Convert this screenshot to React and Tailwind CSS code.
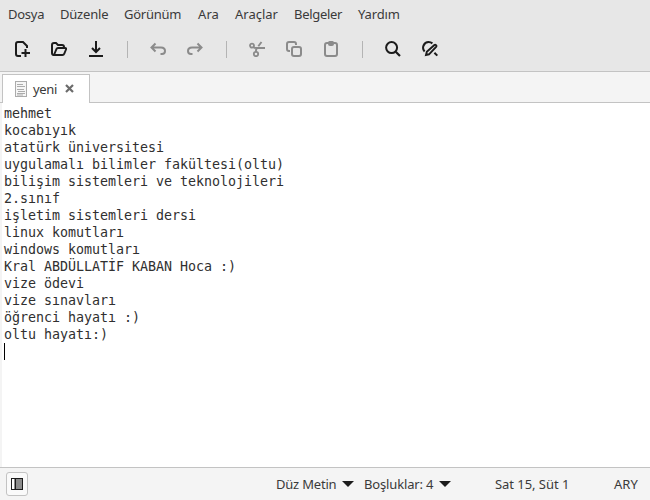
import React from "react";

const menus = [
  { label: "Dosya", cls: "w-[52px]", text: "tracking-[-0.25px]" },
  { label: "Düzenle", cls: "w-[64px]", text: "tracking-[-0.2px]" },
  { label: "Görünüm", cls: "w-[74px]", text: "tracking-[-0.25px]" },
  { label: "Ara", cls: "w-[37px]", text: "tracking-[0.1px]" },
  { label: "Araçlar", cls: "w-[59px]", text: "tracking-[0px]" },
  { label: "Belgeler", cls: "w-[64px]", text: "tracking-[-0.3px]" },
  { label: "Yardım", cls: "w-[50px]", text: "tracking-[-0.15px]" },
];

const lines = [
  "mehmet",
  "kocabıyık",
  "atatürk üniversitesi",
  "uygulamalı bilimler fakültesi(oltu)",
  "bilişim sistemleri ve teknolojileri",
  "2.sınıf",
  "işletim sistemleri dersi",
  "linux komutları",
  "windows komutları",
  "Kral ABDÜLLATİF KABAN Hoca :)",
  "vize ödevi",
  "vize sınavları",
  "öğrenci hayatı :)",
  "oltu hayatı:)",
];

function Icon({ children, muted }) {
  return (
    <svg
      className={muted ? "h-4 w-4 shrink-0 text-[#8b8b8b]" : "h-4 w-4 shrink-0 text-[#1c1c1c]"}
      viewBox="0 0 16 16"
      fill="none"
      stroke="currentColor"
      strokeWidth="2"
    >
      {children}
    </svg>
  );
}

function Divider() {
  return <div className="ml-[23px] mr-[22px] h-[17px] w-px shrink-0 bg-[#b4b4b4]" />;
}

function Toolbar() {
  return (
    <div className="flex h-[41px] items-center pb-[3px] pl-[14px]">
      <div className="flex gap-[21px]">
        <Icon>
          <path d="M7 15H4Q2 15 2 13V3Q2 1 4 1H9L13 5V7" />
          <path d="M11.5 8V16M7.5 12H16" />
        </Icon>
        <Icon>
          <path d="M3 14Q1 14 1 12V4Q1 2 3 2H5L7 4H11Q13 4 13 6" />
          <path d="M3 14L5.4 8.2Q5.8 7 7 7H14Q15.6 7 15 8.5L13.3 12.7Q12.8 14 11.5 14Z" strokeWidth="1.9" />
        </Icon>
        <Icon>
          <path d="M8 0V11M4 7L8 11L12 7" />
          <path d="M1 15H15" />
        </Icon>
      </div>
      <Divider />
      <div className="flex gap-[21px]">
        <Icon muted>
          <path d="M5.5 2.5L1.5 6.5L5.5 10.5M1.5 6.5H11Q15 6.5 15 10Q15 13 12 13H10.5" />
        </Icon>
        <Icon muted>
          <path d="M10.5 2.5L14.5 6.5L10.5 10.5M14.5 6.5H5Q1 6.5 1 10Q1 13 4 13H5.5" />
        </Icon>
      </div>
      <Divider />
      <div className="flex gap-[21px]">
        <Icon muted>
          <circle cx="3" cy="4.6" r="2" strokeWidth="1.8" />
          <circle cx="7" cy="13" r="2.2" strokeWidth="1.8" />
          <path d="M4.5 6.2Q5.5 7 7 7H16M7 11V9Q7 7.5 8.5 7M9.3 5.3L12.5 1" strokeWidth="1.9" />
        </Icon>
        <Icon muted>
          <path d="M4 10H3Q1 10 1 8V3Q1 1 3 1H8Q10 1 10 3V4" />
          <rect x="6" y="6" width="9" height="9" rx="2" />
        </Icon>
        <Icon muted>
          <rect x="2" y="2" width="12" height="13" rx="2" />
          <path d="M5 1.5Q5 0 6.5 0H9.5Q11 0 11 1.5V3Q11 5 9 5H7Q5 5 5 3Z" fill="currentColor" stroke="none" />
        </Icon>
      </div>
      <Divider />
      <div className="flex gap-[21px]">
        <Icon>
          <circle cx="6.6" cy="6.6" r="5.5" />
          <path d="M10.7 10.7L15 15" strokeWidth="2.2" />
        </Icon>
        <Icon>
          <path d="M2.6 10.5A5.6 5.6 0 0 1 6.6 1.1Q8.8 1.1 10.4 2.4" />
          <path d="M4 14L4.8 10.8L12.4 4Q13.2 3.4 14 4.2Q14.8 5 14.1 5.8L7 13.3Z" strokeWidth="1.9" />
          <path d="M12.4 11.7L15.3 14.6" />
        </Icon>
      </div>
    </div>
  );
}

function Caret({ className }) {
  return (
    <svg className={className} viewBox="0 0 12 6" fill="#1c1c1c">
      <path d="M0 0H12L6 6Z" />
    </svg>
  );
}

export default function App() {
  return (
    <div className="flex h-[500px] w-[650px] flex-col overflow-hidden bg-[#f4f4f4] font-['Noto_Sans',sans-serif] text-[13px] leading-[18px] text-[#3a3a3a]">
      <header className="h-[72px] shrink-0 border-b border-[#c3c3c3] bg-[#e7e7e7]">
        <nav className="flex h-[30px] items-center whitespace-nowrap pb-[2px] pl-2">
          {menus.map((m) => (
            <div key={m.label} className={m.cls}>
              <span className={m.text}>{m.label}</span>
            </div>
          ))}
        </nav>
        <Toolbar />
      </header>

      <div className="flex h-[31px] shrink-0 items-end">
        <div className="h-full w-[2px] border-b border-[#c3c3c3]" />
        <div className="flex h-[29px] w-[88px] items-center border-x border-t border-[#c3c3c3] bg-white pl-3">
          <svg className="h-4 w-3 shrink-0" viewBox="0 0 12 16" fill="none">
            <rect x="0.5" y="0.5" width="11" height="15" fill="#f6f6f6" stroke="#ababab" />
            <path d="M2 3.5H8M2 5.5H10M2 8.5H9M3 10.5H10M2 12.5H10M2 14H8" stroke="#acacac" strokeWidth="1.2" />
          </svg>
          <span className="ml-[6px] w-[25px] tracking-[-0.35px]">yeni</span>
          <svg className="mb-px ml-[7px] h-[9px] w-[9px] shrink-0" viewBox="0 0 9 9" stroke="#6c6c6c" strokeWidth="2.2">
            <path d="M1 1L8 8M8 1L1 8" />
          </svg>
        </div>
        <div className="h-full flex-1 border-b border-[#c3c3c3]" />
      </div>

      <main className="ml-[2px] flex-1 bg-white pl-[2px] pt-[2px] font-['DejaVu_Sans_Mono',monospace] text-[13.333px] leading-[17px] tracking-[-0.027px] text-[#303030]">
        {lines.map((line) => (
          <div key={line} className="h-[17px] whitespace-pre">
            {line}
          </div>
        ))}
        <div className="h-[17px] w-px bg-black" />
      </main>

      <footer className="flex h-[33px] shrink-0 items-center whitespace-nowrap border-t border-[#c3c3c3] pl-[6px]">
        <div className="flex h-6 w-[22px] items-center justify-center rounded-[3px] border border-[#c3c3c3] bg-[#fafafa]">
          <svg className="h-3 w-3" viewBox="0 0 12 12">
            <rect width="12" height="12" fill="#1c1c1c" />
            <rect x="1" y="1" width="2" height="10" fill="#ffffff" />
            <rect x="3" y="1" width="1" height="10" fill="#8c8c8c" />
            <rect x="5" y="1" width="6" height="10" fill="#8c8c8c" />
          </svg>
        </div>
        <span className="ml-[248px] w-[66px] tracking-[-0.2px]">Düz Metin</span>
        <Caret className="h-[6px] w-3" />
        <span className="ml-[10px] w-[75px] tracking-[-0.15px]">Boşluklar: 4</span>
        <Caret className="h-[6px] w-3" />
        <span className="ml-[44px] w-[119px] tracking-[-0.05px]">Sat 15, Süt 1</span>
        <span>ARY</span>
      </footer>
    </div>
  );
}
